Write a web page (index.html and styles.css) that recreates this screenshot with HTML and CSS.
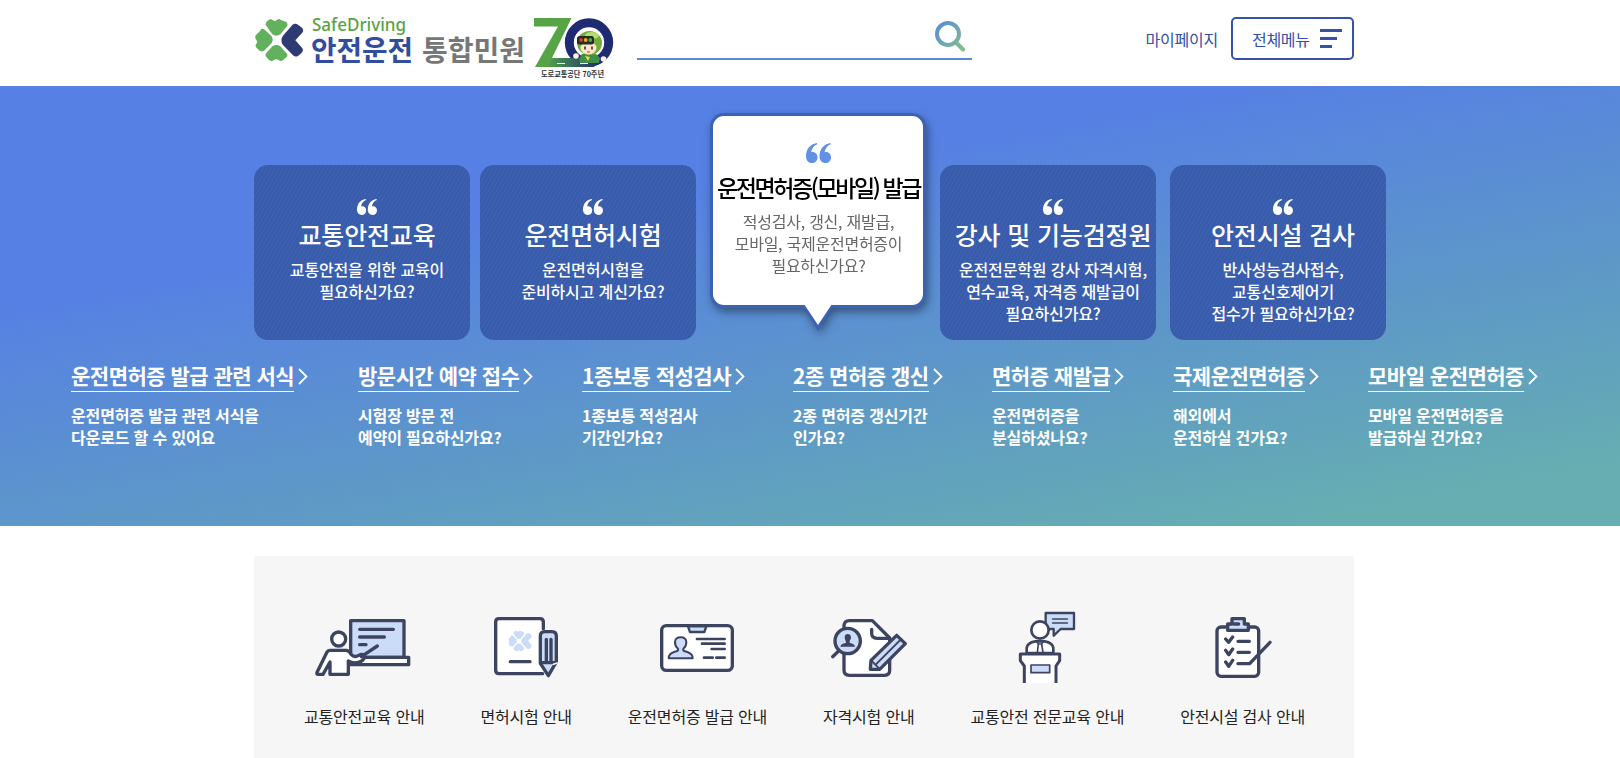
FILE: index.html
```
<!DOCTYPE html>
<html lang="ko">
<head>
  <meta charset="UTF-8" />
  <meta name="viewport" content="width=device-width, initial-scale=1.0"/>
  <title>안전운전 통합민원</title>
  <link rel="stylesheet" href="styles.css">
</head>
<body>

  <!-- Shared shapes -->
  <svg class="defs" width="0" height="0">
    <defs>
      <symbol id="quote" viewBox="0 0 20 16">
        <path id="q" d="M8.6 0C3.2 1 0 5 0 10.6 0 14 2 16 4.7 16c2.600 0 4.500-1.900 4.500-4.500C9.200 9 7.500 7.200 5.300 7.200c-.5 0-.9.1-1.200.2C4.500 4.400 6.200 2.200 9 1z"/>
        <use href="#q" x="10.800"/>
      </symbol>
      <symbol id="clover" viewBox="0 0 144 128">
        <path d="M32 18Q30 12 38 5L44 1Q50-1 54 4Q60 8 66 2Q72-2 78 3L94 9Q100 16 96 22L76 46Q64 54 52 46Z"/>
        <path d="M18 30Q24 28 30 33L50 52Q56 63 50 72L29 94Q22 100 14 95L5 87Q-1 80 4 74Q9 68 2 60Q-1 52 3 48L15 36Z"/>
        <path d="M52 82Q64 74 76 82L96 104Q99 110 94 115L84 124Q77 128 72 124Q64 117 56 124Q50 129 43 124L34 114Q29 108 34 102Z"/>
      </symbol>
      <path id="clover-wing" d="M112 18Q120 10 130 18L141 26Q148 34 141 42L121 64L141 86Q147 94 140 101L130 110Q122 116 114 109L84 78Q74 64 84 50Z"/>
    </defs>
  </svg>

  <header class="header">
    <div class="header-inner">
      <a class="logo" href="#">
        <svg width="362" height="86" viewBox="0 0 362 86">
          <g fill="#64b15d"><use href="#clover" x="1" y="19" width="48" height="42.700"/></g>
          <use href="#clover-wing" transform="translate(1 19) scale(.3333)" fill="#2e3a74"/>
          <text class="logo-en" x="58" y="30.500" textLength="94" lengthAdjust="spacingAndGlyphs">SafeDriving</text>
          <text class="logo-ko" x="57" y="60.500" textLength="102" lengthAdjust="spacingAndGlyphs">안전운전</text>
          <text class="logo-ko gray" x="168" y="60.500" textLength="103" lengthAdjust="spacingAndGlyphs">통합민원</text>
          <!-- 70th anniversary mark -->
          <linearGradient id="seventy"><stop stop-color="#4fa147"/><stop offset="1" stop-color="#1e2b73"/></linearGradient>
          <path d="M280 18H317.500L298 58H325V67H281L304 26.500H280Z" fill="#57a447"/>
          <circle cx="335" cy="42.500" r="19.700" fill="#fff" stroke="#1e2b73" stroke-width="9"/>
          <path d="M298 58H346L340 67H294Z" fill="url(#seventy)"/>
          <path d="M303 63.500h8M326 63.500h8" stroke="#fff" stroke-width="1.200"/>
          <path d="M325 59l3-5h14l4 4-1 5h-19z" fill="#3f8f45"/>
          <ellipse cx="335.500" cy="43" rx="12.500" ry="12" fill="#6fae3c"/>
          <ellipse cx="338" cy="35.500" rx="7" ry="3.500" fill="#b6db71"/>
          <ellipse cx="334.500" cy="48" rx="8" ry="6.500" fill="#ffe5c7"/>
          <rect x="323" y="36" width="17" height="8.500" rx="2.500" fill="#252e20"/>
          <circle cx="327" cy="40" r="1.900" fill="#d83a2e"/><circle cx="331.700" cy="40" r="1.900" fill="#e9a725"/><circle cx="336.300" cy="40" r="1.900" fill="#4ba946"/>
          <path d="M331 46.500v3M338 46.500v3" stroke="#333" stroke-width="1.600"/>
          <path d="M333 52h3" stroke="#d7504a" stroke-width="1.200"/>
          <path d="M331 56l5 1-2 4z" fill="#f0d34b"/>
          <circle cx="322" cy="56" r="2.800" fill="#fff0df"/><circle cx="349.500" cy="59" r="2.800" fill="#fff0df"/>
          <text class="logo-small" x="287" y="76.500" textLength="63" lengthAdjust="spacingAndGlyphs">도로교통공단 70주년</text>
        </svg>
      </a>

      <div class="search">
        <svg width="32" height="32" viewBox="0 0 32 32" fill="none" stroke="url(#glass)" stroke-width="4">
          <linearGradient id="glass" gradientUnits="userSpaceOnUse" x1="3" y1="5" x2="29" y2="30"><stop stop-color="#5c8fd6"/><stop offset="1" stop-color="#80c088"/></linearGradient>
          <circle cx="14" cy="14" r="11"/>
          <path d="M21.500 22L29 29.500" stroke-linecap="round"/>
        </svg>
      </div>

      <a class="mypage" href="#">마이페이지</a>
      <a class="allmenu" href="#">
        <span>전체메뉴</span>
        <i class="bars"><b></b><b></b><b></b></i>
      </a>
    </div>
  </header>

  <main class="visual">
    <ul class="cards">
      <li class="card">
        <svg class="quote"><use href="#quote"/></svg>
        <h2>교통안전교육</h2>
        <p>교통안전을 위한 교육이<br>필요하신가요?</p>
      </li>
      <li class="card">
        <svg class="quote"><use href="#quote"/></svg>
        <h2>운전면허시험</h2>
        <p>운전면허시험을<br>준비하시고 계신가요?</p>
      </li>
      <li class="card active">
        <svg class="quote"><use href="#quote"/></svg>
        <h2>운전면허증(모바일) 발급</h2>
        <p>적성검사, 갱신, 재발급,<br>모바일, 국제운전면허증이<br>필요하신가요?</p>
        <svg class="tail" width="30" height="27" viewBox="0 0 30 27">
          <path d="M.5 3H29.500L15 27Z" fill="#3c62b3"/>
          <path d="M1 0H29L15 21Z" fill="#fff"/>
        </svg>
      </li>
      <li class="card">
        <svg class="quote"><use href="#quote"/></svg>
        <h2>강사 및 기능검정원</h2>
        <p>운전전문학원 강사 자격시험,<br>연수교육, 자격증 재발급이<br>필요하신가요?</p>
      </li>
      <li class="card">
        <svg class="quote"><use href="#quote"/></svg>
        <h2>안전시설 검사</h2>
        <p>반사성능검사접수,<br>교통신호제어기<br>접수가 필요하신가요?</p>
      </li>
    </ul>

    <ul class="links">
      <li>
        <a href="#"><span>운전면허증 발급 관련 서식</span><svg class="arrow" viewBox="0 0 10 17"><path d="M1 1L8.500 8.500L1 16"/></svg></a>
        <p>운전면허증 발급 관련 서식을<br>다운로드 할 수 있어요</p>
      </li>
      <li>
        <a href="#"><span>방문시간 예약 접수</span><svg class="arrow" viewBox="0 0 10 17"><path d="M1 1L8.500 8.500L1 16"/></svg></a>
        <p>시험장 방문 전<br>예약이 필요하신가요?</p>
      </li>
      <li>
        <a href="#"><span>1종보통 적성검사</span><svg class="arrow" viewBox="0 0 10 17"><path d="M1 1L8.500 8.500L1 16"/></svg></a>
        <p>1종보통 적성검사<br>기간인가요?</p>
      </li>
      <li>
        <a href="#"><span>2종 면허증 갱신</span><svg class="arrow" viewBox="0 0 10 17"><path d="M1 1L8.500 8.500L1 16"/></svg></a>
        <p>2종 면허증 갱신기간<br>인가요?</p>
      </li>
      <li>
        <a href="#"><span>면허증 재발급</span><svg class="arrow" viewBox="0 0 10 17"><path d="M1 1L8.500 8.500L1 16"/></svg></a>
        <p>운전면허증을<br>분실하셨나요?</p>
      </li>
      <li>
        <a href="#"><span>국제운전면허증</span><svg class="arrow" viewBox="0 0 10 17"><path d="M1 1L8.500 8.500L1 16"/></svg></a>
        <p>해외에서<br>운전하실 건가요?</p>
      </li>
      <li>
        <a href="#"><span>모바일 운전면허증</span><svg class="arrow" viewBox="0 0 10 17"><path d="M1 1L8.500 8.500L1 16"/></svg></a>
        <p>모바일 운전면허증을<br>발급하실 건가요?</p>
      </li>
    </ul>
  </main>

  <section class="guide">
    <a href="#">
      <svg class="icon" width="100" height="80" viewBox="224 198 300 240">
        <path class="tint" d="M334 242H494V352H334Z"/>
        <path class="paper" d="M334 352H508V374H334Z"/>
        <path d="M361 268H462M361 291H435M361 314H380"/>
        <circle class="paper" cx="298" cy="297" r="21"/>
        <path class="paper" d="M272 331H322Q330 333 336 344Q344 352 354 348L366 343Q378 342 376 352Q372 362 360 366Q342 372 327 363V403H272V366L251 403H236Q230 402 234 395L262 338Q266 331 272 331Z"/>
        <path d="M366 350L414 318"/>
      </svg>
      <span>교통안전교육 안내</span>
    </a>
    <a href="#">
      <svg class="icon" width="70" height="80" viewBox="753 198 210 240">
        <path class="paper" d="M908 401H777Q767 401 767 391V246Q767 236 777 236H900Q910 236 910 246V401" stroke="none"/>
        <path d="M908 401H777Q767 401 767 391V246Q767 236 777 236H900Q910 236 910 246V266"/>
        <g transform="translate(805 272) scale(.49)" fill="#cbdcf8" stroke="none"><use href="#clover" width="144" height="128"/><use href="#clover-wing"/></g>
        <path d="M811 365H870"/>
        <path class="tint" d="M901 288Q901 275 914 275H936Q949 275 949 288V366L925 407L901 370Z"/>
        <path d="M902 368H949M919 298V364M933 298V364"/>
        <path d="M940 373L952 369" stroke="#f6f6f6" stroke-width="5"/>
      </svg>
      <span>면허시험 안내</span>
    </a>
    <a href="#">
      <svg class="icon" width="80" height="80" viewBox="171 198 240 240">
        <rect class="paper" x="185" y="257" width="212" height="134" rx="14"/>
        <path class="tint" d="M264 259L270 276H313L319 259Z" stroke-width="7"/>
        <path class="tint" stroke-width="6" d="M206 355Q206 341 222 336L232 333Q237 330 232 324Q225 318 225 306Q226 292 242 292Q258 292 259 306Q259 318 252 324Q247 330 252 333L262 336Q278 341 278 355Z"/>
        <path d="M291 297H374M306 311H374M335 327H374M312 353H338M349 353H374" stroke-width="8"/>
      </svg>
      <span>운전면허증 발급 안내</span>
    </a>
    <a href="#">
      <svg class="icon" width="80" height="80" viewBox="684 198 240 240">
        <path class="paper" d="M729 256Q731 242 745 242H814L866 294V391Q866 406 851 406H745Q729 406 729 391Z"/>
        <path d="M812 268V280Q812 295 828 295H864"/>
        <path d="M712 334L695 350"/>
        <circle class="tint" cx="740" cy="303" r="38"/>
        <path d="M718 320Q720 311 734 309Q736 307 734 303Q731 299 731 292Q732 282 740 282Q749 282 750 292Q750 299 746 303Q745 307 747 309Q760 311 762 320Z" fill="#3c4460" stroke="none"/>
        <path class="tint" d="M887 286L913 311L836 388L808 388L810 361Z"/>
        <path d="M899 299L824 374M811 362L835 386" stroke-width="6"/>
      </svg>
      <span>자격시험 안내</span>
    </a>
    <a href="#">
      <svg class="icon" width="60" height="80" viewBox="231 198 180 240">
        <path class="tint" d="M317 219H402V267H362L341 287V267H317Z" stroke-width="7"/>
        <path d="M338 237H382M338 249H382" stroke-width="5"/>
        <circle class="paper" cx="300" cy="270" r="26" stroke-width="8"/>
        <path class="paper" d="M260 339V324Q262 308 286 304H314Q338 308 340 324V339Z" stroke-width="8"/>
        <path d="M289 302L295 312L292 338M311 302L305 312L309 338M295 312H305" stroke-width="5"/>
        <path d="M253 362H348V428H253Z" class="paper" stroke="none"/>
        <path class="paper" d="M253 429V378L241 362V342H359V362L348 378V429" stroke-width="9" stroke-linecap="butt"/>
        <path d="M250 362H350" stroke="#fff" stroke-width="4"/>
        <rect class="tint" x="273" y="375" width="56" height="23" stroke-width="5"/>
      </svg>
      <span>교통안전 전문교육 안내</span>
    </a>
    <a href="#">
      <svg class="icon" width="60" height="80" viewBox="815 198 180 240">
        <rect class="paper" x="827" y="261" width="125" height="148" rx="12"/>
        <path class="tint" d="M859 252H872V236H909V252H921V271H859Z"/>
        <path d="M878 252H892"/>
        <path d="M853 297L862 307L874 291M853 331L862 344L874 327M853 366L862 379L874 361M890 304H924M890 337H924M890 371H925L986 307"/>
      </svg>
      <span>안전시설 검사 안내</span>
    </a>
  </section>

</body>
</html>
```
FILE: styles.css
```
* {
  box-sizing: border-box;
  margin: 0;
  padding: 0;
}

body {
  font-family: 'Noto Sans CJK KR', 'Noto Sans', sans-serif;
  font-size: 16px;
  background: #fff;
  color: #222;
}

ul { list-style: none; }
a { color: inherit; text-decoration: none; }
svg { display: block; }

.defs { position: absolute; }

/* Header */
.header {
  height: 86px;
}

.header-inner {
  width: 1100px;
  height: 86px;
  margin-left: 254px;
  display: flex;
  align-items: flex-start;
}

.logo-en {
  font-family: 'Noto Sans', sans-serif;
  font-size: 17.5px;
  font-weight: 500;
  fill: #57a447;
}

.logo-ko {
  font-size: 28px;
  font-weight: 700;
  fill: #304d9f;
}

.logo-ko.gray { fill: #777; }

.logo-small {
  font-size: 7.5px;
  font-weight: 700;
  fill: #333;
}

.search {
  width: 335px;
  height: 60px;
  margin-left: 21px;
  padding: 20px 6px 0 0;
  border-bottom: 2px solid #6088d8;
  display: flex;
  justify-content: flex-end;
}

.mypage {
  margin-left: auto;
  margin-right: 13px;
  line-height: 24px;
  padding-top: 27px;
  letter-spacing: -0.2px;
  color: #334fa8;
}

.allmenu {
  width: 123px;
  height: 43px;
  margin-top: 17px;
  border: 2px solid #3552aa;
  border-radius: 5px;
  color: #334fa8;
  display: flex;
  align-items: center;
  padding-left: 19px;
  letter-spacing: -0.3px;
}

.bars {
  margin-left: 10px;
  display: flex;
  flex-direction: column;
  gap: 5px;
}

.bars b { width: 22px; height: 3px; background: #3552aa; }
.bars b:nth-child(2) { width: 17px; }
.bars b:nth-child(3) { width: 12px; }

/* Main visual */
.visual {
  height: 440px;
  padding-top: 27px;
  background: linear-gradient(170deg, #5680e4 30%, #5d97c9 62%, #66aeb1 92%);
  color: #fff;
}

.cards {
  margin-left: 254px;
  display: flex;
  align-items: flex-start;
}

.card {
  flex: none;
  width: 216px;
  height: 175px;
  margin: 52px 14px 0 0;
  padding: 34px 0 0 10px;
  border-radius: 14px;
  background: repeating-linear-gradient(120deg, #385cab 0, #385cab 1.5px, #3e63b1 2.5px, #385cab 3.5px);
  display: flex;
  flex-direction: column;
  align-items: center;
  text-align: center;
}

.card:first-child { margin-right: 10px; }

.card h2 {
  margin-top: 1px;
  font-size: 25px;
  font-weight: 500;
  line-height: 36px;
  letter-spacing: -0.15px;
  white-space: nowrap;
}

.card p {
  margin-top: 6px;
  font-weight: 500;
  line-height: 22px;
  letter-spacing: -0.15px;
  white-space: nowrap;
}

.quote {
  width: 20px;
  height: 16px;
  fill: #fff;
}

.card.active {
  position: relative;
  height: 195px;
  margin-top: 0;
  padding: 27px 0 0 1px;
  background: #fff;
  border: 3px solid #3c62b3;
  filter: drop-shadow(2px 4px 4px rgba(0, 0, 0, 0.4));
}

.card.active .quote {
  width: 25px;
  height: 20px;
  fill: #6290e5;
}

.card.active h2 {
  margin-top: 6px;
  font-size: 23px;
  letter-spacing: -2.4px;
  color: #000;
}

.card.active p {
  margin-top: 5px;
  font-weight: 400;
  letter-spacing: -0.25px;
  color: #666;
}

.tail {
  position: absolute;
  left: 90px;
  top: 188px;
}

.links {
  margin: 23px 0 0 71px;
  display: grid;
  grid-template-columns: 287px 224px 211px 199px 181px 195px auto;
}

.links a {
  display: flex;
  align-items: flex-start;
}

.links span {
  height: 29px;
  border-bottom: 1px solid #fff;
  font-size: 21px;
  font-weight: 700;
  line-height: 24px;
  letter-spacing: -0.5px;
  white-space: nowrap;
}

.arrow {
  width: 10px;
  height: 17px;
  margin: 5px 0 0 4px;
  fill: none;
  stroke: #fff;
  stroke-width: 1.8;
}

.links p {
  margin-top: 12px;
  font-weight: 700;
  line-height: 22px;
  letter-spacing: -0.15px;
}

/* Guide */
.guide {
  width: 1100px;
  height: 202px;
  margin: 30px 0 0 254px;
  padding: 50px 49px 0 50px;
  background: #f6f6f6;
  display: flex;
  justify-content: space-between;
}

.guide a {
  display: flex;
  flex-direction: column;
  align-items: center;
}

.guide span {
  margin-top: 18px;
  line-height: 24px;
  letter-spacing: -0.2px;
}

.icon {
  fill: none;
  stroke: #3c4460;
  stroke-width: 10;
  stroke-linecap: round;
  stroke-linejoin: round;
}

.icon .paper { fill: #fff; }
.icon .tint { fill: #cbdcf8; }
```
